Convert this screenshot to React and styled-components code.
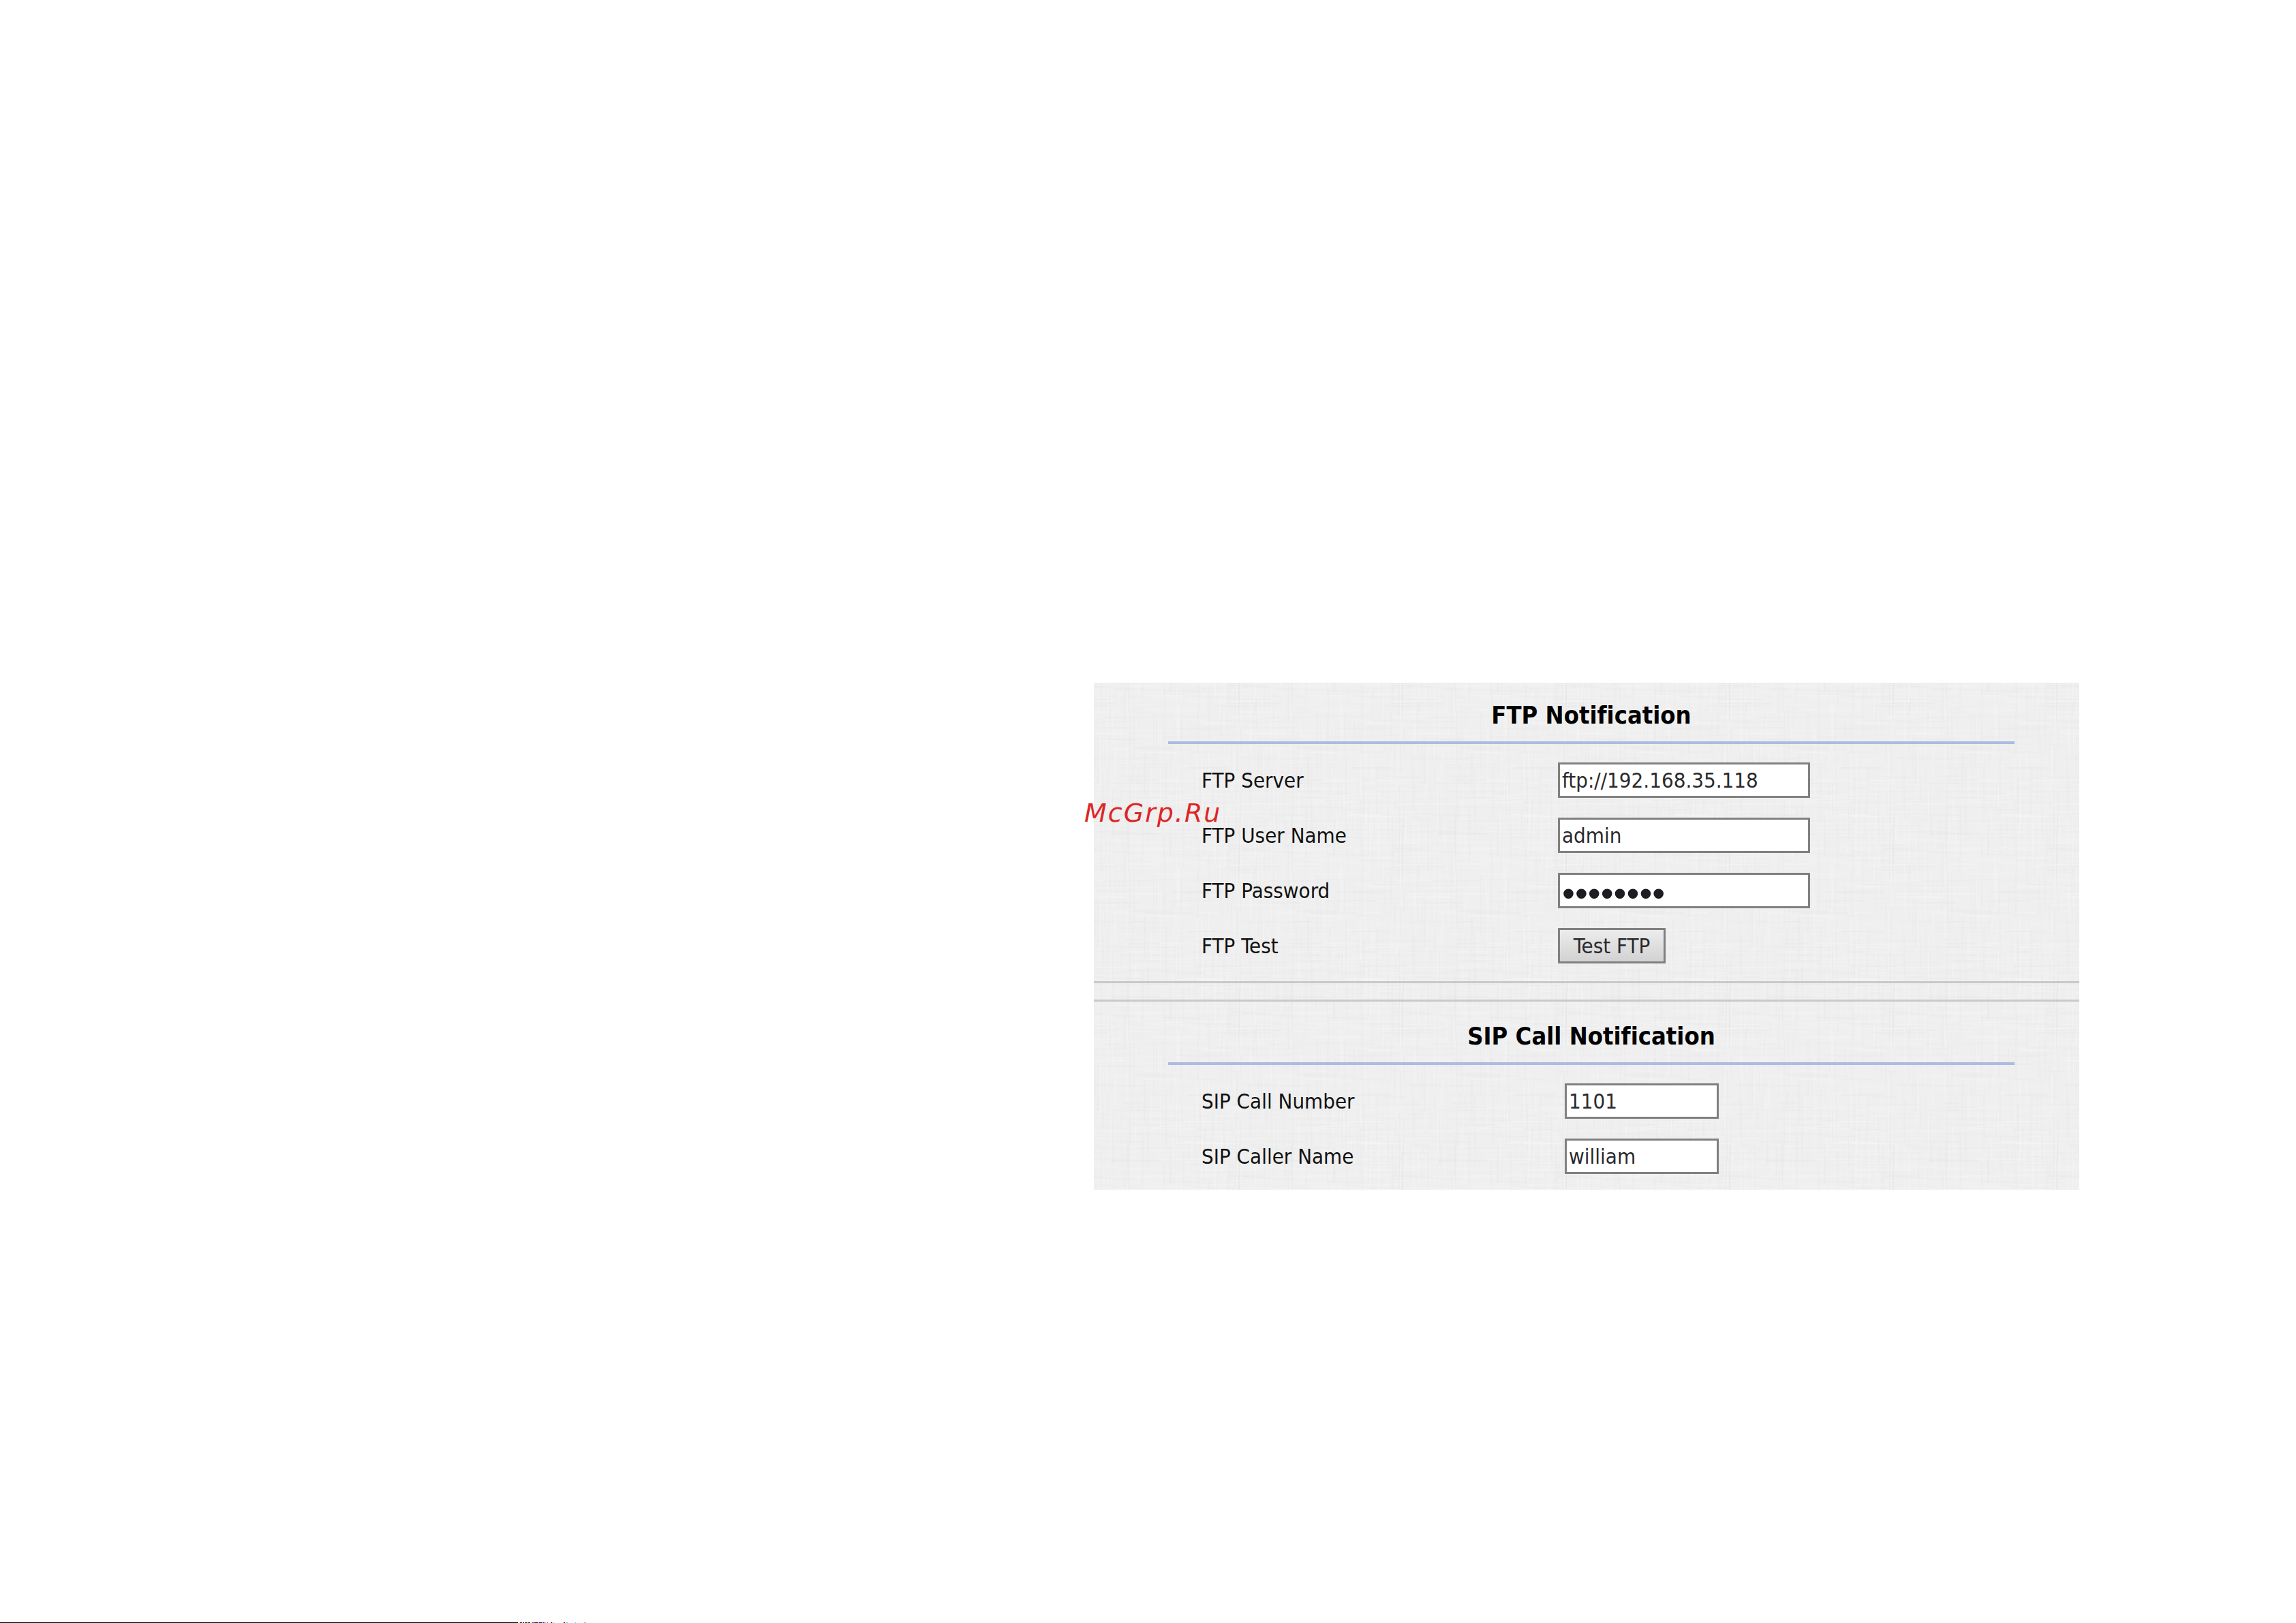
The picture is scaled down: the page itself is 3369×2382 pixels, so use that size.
import React from "react";
import styled, { createGlobalStyle } from "styled-components";

const GlobalStyle = createGlobalStyle`
  *, *::before, *::after { box-sizing: border-box; }
  body {
    margin: 0;
    background: #fff;
    font-family: "DejaVu Sans Condensed", "DejaVu Sans", sans-serif;
    font-variant-ligatures: none;
  }
  input, button { font-family: inherit; }
`;

const Page = styled.div`
  min-height: 100vh;
  display: flex;
  flex-direction: column;
`;

const Main = styled.main`
  flex: 1;
  display: grid;
  grid-template-columns: 1605fr 1446fr 318fr;
  grid-template-rows: 1002px auto;
  align-items: start;
`;

const Panel = styled.form`
  grid-area: 2 / 2;
  position: relative;
  isolation: isolate;
  background: #efefef;
`;

const Linen = styled.svg`
  position: absolute;
  inset: 0;
  z-index: -1;
  width: 100%;
  height: 100%;
`;

const Section = styled.section`
  padding: ${(p) => p.$top}px 95px ${(p) => p.$bottom}px 109px;
`;

const Title = styled.h2`
  margin: 0;
  padding-bottom: 10px;
  border-bottom: 4px solid #abbce3;
  text-align: center;
  font-size: 36px;
  line-height: 56px;
  font-weight: 700;
  color: #000;
`;

const Rows = styled.div`
  display: grid;
  gap: 29px;
  padding: 27px 0 0 49px;
`;

const Row = styled.div`
  display: grid;
  grid-template-columns: ${(p) => p.$label}px 1fr;
  align-items: center;
  justify-items: start;
`;

const Label = styled.label`
  font-size: 31px;
  line-height: 52px;
  color: #111;
`;

const Field = styled.input`
  width: ${(p) => p.$width}px;
  height: 52px;
  margin: 0;
  padding: 0 3px;
  border: 3px solid #808080;
  border-radius: 0;
  background: #fff;
  font-size: 31px;
  color: #2a2a2e;

  &[type="password"] {
    padding-top: 8px;
    font-family: "Liberation Sans", sans-serif;
    font-size: 54px;
    color: #1c1c22;
  }
`;

const Button = styled.button`
  height: 52px;
  width: 158px;
  padding: 0;
  border: 3px solid #808080;
  border-radius: 0;
  background: linear-gradient(#ececec, #d2d2d2);
  font-size: 31px;
  color: #2a2a2e;
`;

const Divider = styled.div`
  height: 30px;
  border-top: 3px solid #c9c9c9;
  border-bottom: 3px solid #c9c9c9;
`;

const Watermark = styled.span`
  position: absolute;
  left: -14px;
  top: 167px;
  font: italic 38px/48px "DejaVu Sans", sans-serif;
  letter-spacing: 2px;
  color: #dc2626;
`;

const Strip = styled.svg`
  display: block;
  width: 900px;
  height: 1px;
`;

const TILE = 240;

// Small seeded generator, so that the weave is the same on every load.
// A thread that runs over the tile's edge is repeated on the other side.
function makeThreads(count) {
  let seed = 7;
  const next = () => {
    seed = (seed * 16807) % 2147483647;
    return seed / 2147483647;
  };
  const threads = [];
  for (let i = 0; i < count; i += 1) {
    const across = i % 2 === 0;
    const length = 25 + Math.round(next() * 60);
    const x = Math.round(next() * TILE);
    const y = Math.round(next() * TILE);
    const shape = {
      width: across ? length : 2,
      height: across ? 2 : length,
      fill: next() > 0.5 ? "#e6e6e6" : "#f6f6f6",
      opacity: 0.15 + next() * 0.2,
    };
    threads.push({ x, y, ...shape });
    threads.push(across ? { x: x - TILE, y, ...shape } : { x, y: y - TILE, ...shape });
  }
  return threads;
}

const THREADS = makeThreads(420);

const SPECKS = [
  [762, 1, "#e0e060"], [763, 3, "#222"], [767, 2, "#125"], [770, 4, "#131"],
  [775, 3, "#222"], [779, 1, "#7d7"], [781, 2, "#22a"], [784, 6, "#311"],
  [791, 5, "#124"], [797, 2, "#22c"], [800, 1, "#ea8"], [803, 1, "#a44"],
  [808, 2, "#222"], [811, 1, "#333"], [827, 2, "#411"], [831, 2, "#5cc"],
  [844, 1, "#5cc"], [857, 1, "#cc5"], [858, 1, "#22a"],
];

const ftpFields = [
  { id: "ftp-server", label: "FTP Server", type: "text", value: "ftp://192.168.35.118" },
  { id: "ftp-user", label: "FTP User Name", type: "text", value: "admin" },
  { id: "ftp-password", label: "FTP Password", type: "password", value: "password" },
];

const sipFields = [
  { id: "sip-number", label: "SIP Call Number", value: "1101" },
  { id: "sip-name", label: "SIP Caller Name", value: "william" },
];

export default function App() {
  return (
    <Page>
      <GlobalStyle />
      <Main>
        <Panel onSubmit={(e) => e.preventDefault()}>
          <Linen aria-hidden="true">
            <defs>
              <pattern id="linen" width={TILE} height={TILE} patternUnits="userSpaceOnUse">
                {THREADS.map((t, i) => (
                  <rect key={i} {...t} />
                ))}
              </pattern>
            </defs>
            <rect width="100%" height="100%" fill="url(#linen)" />
          </Linen>
          <Section $top={20} $bottom={26}>
            <Title>FTP Notification</Title>
            <Rows>
              {ftpFields.map((f) => (
                <Row key={f.id} $label={523}>
                  <Label htmlFor={f.id}>{f.label}</Label>
                  <Field id={f.id} type={f.type} defaultValue={f.value} $width={370} />
                </Row>
              ))}
              <Row $label={523}>
                <Label htmlFor="ftp-test">FTP Test</Label>
                <Button id="ftp-test" type="button">Test FTP</Button>
              </Row>
            </Rows>
          </Section>
          <Divider />
          <Section $top={23} $bottom={23}>
            <Title>SIP Call Notification</Title>
            <Rows>
              {sipFields.map((f) => (
                <Row key={f.id} $label={533}>
                  <Label htmlFor={f.id}>{f.label}</Label>
                  <Field id={f.id} type="text" defaultValue={f.value} $width={226} />
                </Row>
              ))}
            </Rows>
          </Section>
          <Watermark>McGrp.Ru</Watermark>
        </Panel>
      </Main>
      <Strip aria-hidden="true">
        <rect width="760" height="1" fill="#000" />
        {SPECKS.map(([x, width, fill]) => (
          <rect key={x} x={x} width={width} height="1" fill={fill} />
        ))}
      </Strip>
    </Page>
  );
}
